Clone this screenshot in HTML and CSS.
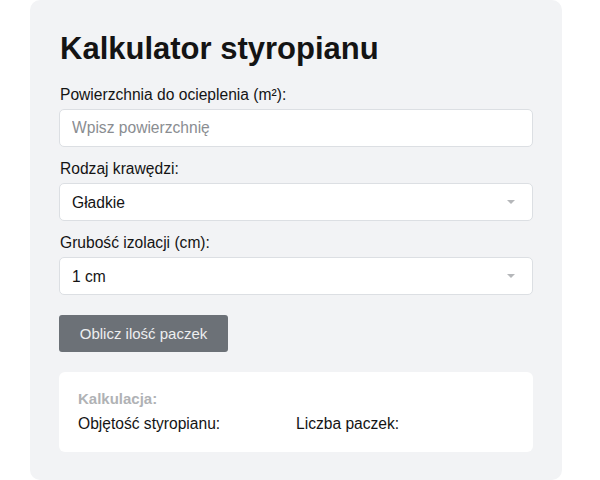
FILE: index.html
```html
<!DOCTYPE html>
<html lang="pl">
<head>
<meta charset="utf-8">
<title>Kalkulator styropianu</title>
<link rel="stylesheet" href="styles.css">
</head>
<body>
<div class="card">
  <h1 class="title">Kalkulator styropianu</h1>
  <div class="group">
    <label class="label" for="area">Powierzchnia do ocieplenia (m²):</label>
    <input class="field" id="area" type="text" placeholder="Wpisz powierzchnię">
  </div>
  <div class="group">
    <label class="label" for="edge">Rodzaj krawędzi:</label>
    <div class="select-wrap">
      <select class="field select" id="edge"><option>Gładkie</option></select>
    </div>
  </div>
  <div class="group">
    <label class="label" for="thick">Grubość izolacji (cm):</label>
    <div class="select-wrap">
      <select class="field select" id="thick"><option>1 cm</option></select>
    </div>
  </div>
  <button class="btn" type="button">Oblicz ilość paczek</button>
  <div class="result">
    <div class="result-title">Kalkulacja:</div>
    <div class="result-row">
      <span class="result-item">Objętość styropianu:</span>
      <span class="result-item">Liczba paczek:</span>
    </div>
  </div>
</div>
</body>
</html>
```
FILE: styles.css
```css
* { box-sizing: border-box; }
html, body { margin: 0; padding: 0; background: #ffffff; }
body {
  font-family: "Liberation Sans", Arial, sans-serif;
  color: #111;
  padding: 0 38px 0 30px;
}
.card {
  background: #f2f3f5;
  border-radius: 10px;
  padding: 31px 29px 28px 29px;
  width: 532px;
}
.title {
  margin: 0 0 18px 1px;
  font-size: 31px;
  line-height: 36px;
  font-weight: 700;
  color: #141414;
}
.group { margin-bottom: 12px; display: flex; flex-direction: column; }
.label {
  font-size: 15.6px;
  line-height: 20px;
  margin: 0 0 4px 1px;
  color: #141414;
}
.field {
  width: 100%;
  height: 38px;
  border: 1px solid #dcdfe3;
  border-radius: 5px;
  background: #fff;
  padding: 0 12px;
  font-family: inherit;
  font-size: 15.6px;
  color: #141414;
  outline: none;
}
.field::placeholder { color: #8a8d91; }
.select-wrap { position: relative; }
.select { appearance: none; -webkit-appearance: none; }
.select-wrap::after {
  content: "";
  position: absolute;
  right: 18px;
  top: 17px;
  border-left: 4px solid transparent;
  border-right: 4px solid transparent;
  border-top: 4px solid #b5b7ba;
  pointer-events: none;
}
.btn {
  margin-top: 8px;
  width: 169px;
  height: 37px;
  border: none;
  border-radius: 3px;
  background: #6c7177;
  color: #eceef0;
  font-family: inherit;
  font-size: 15px;
  padding: 0;
}
.result {
  margin-top: 20px;
  background: #fff;
  border-radius: 6px;
  padding: 18px 19px 18px 19px;
}
.result-title {
  font-size: 15px;
  font-weight: 700;
  color: #b0b2b5;
  line-height: 18px;
  margin-bottom: 6px;
}
.result-row { display: flex; font-size: 15.6px; line-height: 20px; color: #141414; }
.result-item:first-child { width: 218px; }
```
